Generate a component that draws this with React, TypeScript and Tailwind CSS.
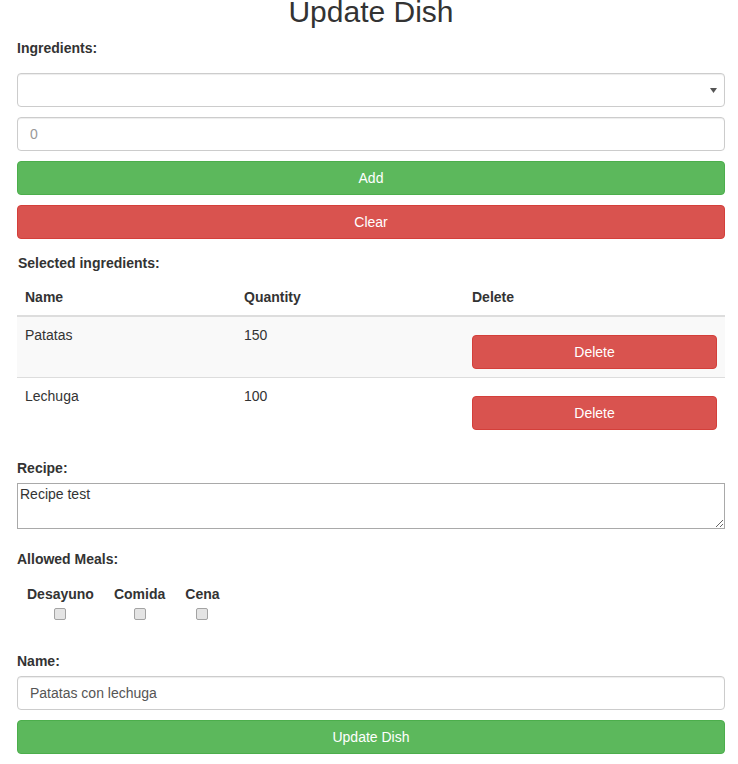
import React from "react";

const font = { fontFamily: '"Liberation Sans", Arial, Helvetica, sans-serif' };

function Btn({ color, children }: { color: "green" | "red"; children: React.ReactNode }) {
  const cls =
    color === "green"
      ? "bg-[#5cb85c] border-[#4cae4c]"
      : "bg-[#d9534f] border-[#d43f3a]";
  return (
    <button
      type="button"
      className={`${cls} block w-full h-[34px] rounded-[4px] border text-white text-[14px] leading-[20px] text-center`}
    >
      {children}
    </button>
  );
}

function Check({ label }: { label: string }) {
  return (
    <label className="flex flex-col items-center px-[10px] font-bold text-[14px] leading-[20px]">
      <span>{label}</span>
      <input
        type="checkbox"
        className="appearance-none mt-[4px] w-[12px] h-[12px] rounded-[2px] border border-[#a3a3a3] bg-[#e4e4e4]"
      />
    </label>
  );
}

export default function App() {
  const rows = [
    { name: "Patatas", qty: "150" },
    { name: "Lechuga", qty: "100" },
  ];
  return (
    <div className="bg-white text-[#333] text-[14px] leading-[20px] min-h-[764px] overflow-hidden" style={font}>
      <div className="ml-[17px] w-[708px]">
        <h2 className="text-center text-[30px] leading-[33px] font-normal mt-[-5px] mb-[10px]">Update Dish</h2>

        <label className="block font-bold mb-[15px]">Ingredients:</label>

        <div className="relative">
          <select className="appearance-none block w-full h-[34px] rounded-[4px] border border-[#ccc] bg-white px-[12px] shadow-[inset_0_1px_1px_rgba(0,0,0,0.075)]">
            <option></option>
          </select>
          <svg className="absolute right-[8px] top-[15px]" width="7" height="5" viewBox="0 0 7 5">
            <polygon points="0,0 7,0 3.5,5" fill="#555" />
          </svg>
        </div>

        <input
          className="block w-full h-[34px] mt-[10px] rounded-[4px] border border-[#ccc] px-[12px] text-[#555] placeholder:text-[#999] shadow-[inset_0_1px_1px_rgba(0,0,0,0.075)]"
          placeholder="0"
        />

        <div className="mt-[10px]">
          <Btn color="green">Add</Btn>
        </div>
        <div className="mt-[10px]">
          <Btn color="red">Clear</Btn>
        </div>

        <label className="block font-bold mt-[14px] mb-[6px] pl-[1px]">Selected ingredients:</label>

        <table className="w-full border-collapse mb-[20px]">
          <thead>
            <tr>
              <th className="w-[219px] text-left font-bold p-[8px] border-b-2 border-[#ddd]">Name</th>
              <th className="w-[228px] text-left font-bold p-[8px] border-b-2 border-[#ddd]">Quantity</th>
              <th className="text-left font-bold p-[8px] border-b-2 border-[#ddd]">Delete</th>
            </tr>
          </thead>
          <tbody>
            {rows.map((r, i) => (
              <tr key={r.name} className={i % 2 === 0 ? "bg-[#f9f9f9]" : "border-t border-[#ddd]"}>
                <td className="align-top p-[8px]">{r.name}</td>
                <td className="align-top p-[8px]">{r.qty}</td>
                <td className="align-top p-[8px]">
                  <div className="mt-[10px]">
                    <Btn color="red">Delete</Btn>
                  </div>
                </td>
              </tr>
            ))}
          </tbody>
        </table>

        <label className="block font-bold mb-[5px]">Recipe:</label>
        <textarea
          className="block w-full h-[46px] border border-[#a9a9a9] px-[2px] py-[2px] text-[14px] leading-[17px] text-[#333]"
          defaultValue="Recipe test"
        />

        <label className="block font-bold mt-[20px]">Allowed Meals:</label>

        <div className="flex mt-[15px]">
          <Check label="Desayuno" />
          <Check label="Comida" />
          <Check label="Cena" />
        </div>

        <label className="block font-bold mt-[31px] mb-[5px]">Name:</label>
        <input
          className="block w-full h-[34px] rounded-[4px] border border-[#ccc] px-[12px] text-[#555] shadow-[inset_0_1px_1px_rgba(0,0,0,0.075)]"
          defaultValue="Patatas con lechuga"
        />

        <div className="mt-[10px]">
          <Btn color="green">Update Dish</Btn>
        </div>
      </div>
    </div>
  );
}
